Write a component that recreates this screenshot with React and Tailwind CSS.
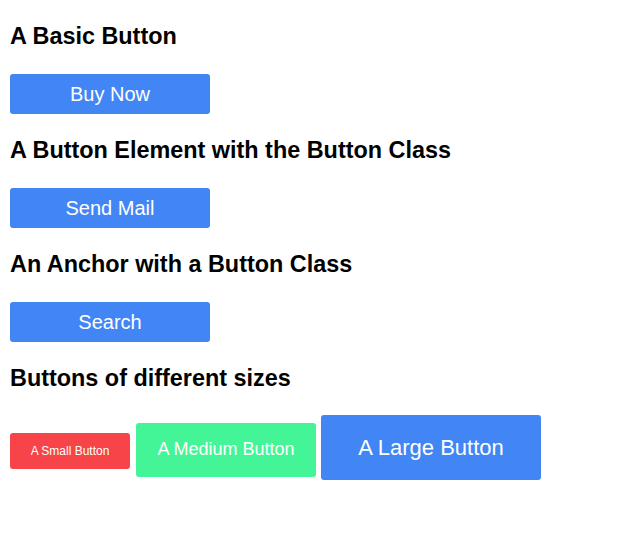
import React from 'react';

const sections = [
  { title: 'A Basic Button', label: 'Buy Now' },
  { title: 'A Button Element with the Button Class', label: 'Send Mail' },
  { title: 'An Anchor with a Button Class', label: 'Search' },
];

function Heading({ children, last }) {
  return (
    <h3
      className={
        last
          ? 'mt-[23px] mb-[24px] text-[23.4px] leading-[26px] font-bold text-black'
          : 'mt-[23px] mb-[25px] text-[23.4px] leading-[26px] font-bold text-black'
      }
    >
      {children}
    </h3>
  );
}

export default function App() {
  return (
    <div className="min-h-[552px] bg-white px-[10px] font-['Liberation_Sans',Arial,sans-serif]">
      {sections.map((s) => (
        <div key={s.title}>
          <Heading>{s.title}</Heading>
          <button
            type="button"
            className="flex h-[40px] w-[200px] items-center justify-center rounded-[3px] bg-[#4286f5] text-[20px] text-white"
          >
            {s.label}
          </button>
        </div>
      ))}

      <Heading last>Buttons of different sizes</Heading>
      <div className="flex items-baseline">
        <button
          type="button"
          className="flex h-[36px] w-[120px] items-center justify-center rounded-[3px] bg-[#f64449] text-[12px] text-white"
        >
          A Small Button
        </button>
        <button
          type="button"
          className="ml-[6px] flex h-[54px] w-[180px] items-center justify-center rounded-[3px] bg-[#43f597] text-[18px] text-white"
        >
          A Medium Button
        </button>
        <button
          type="button"
          className="ml-[5px] flex h-[65px] w-[220px] items-center justify-center rounded-[3px] bg-[#4286f5] text-[22px] text-white"
        >
          A Large Button
        </button>
      </div>
    </div>
  );
}
